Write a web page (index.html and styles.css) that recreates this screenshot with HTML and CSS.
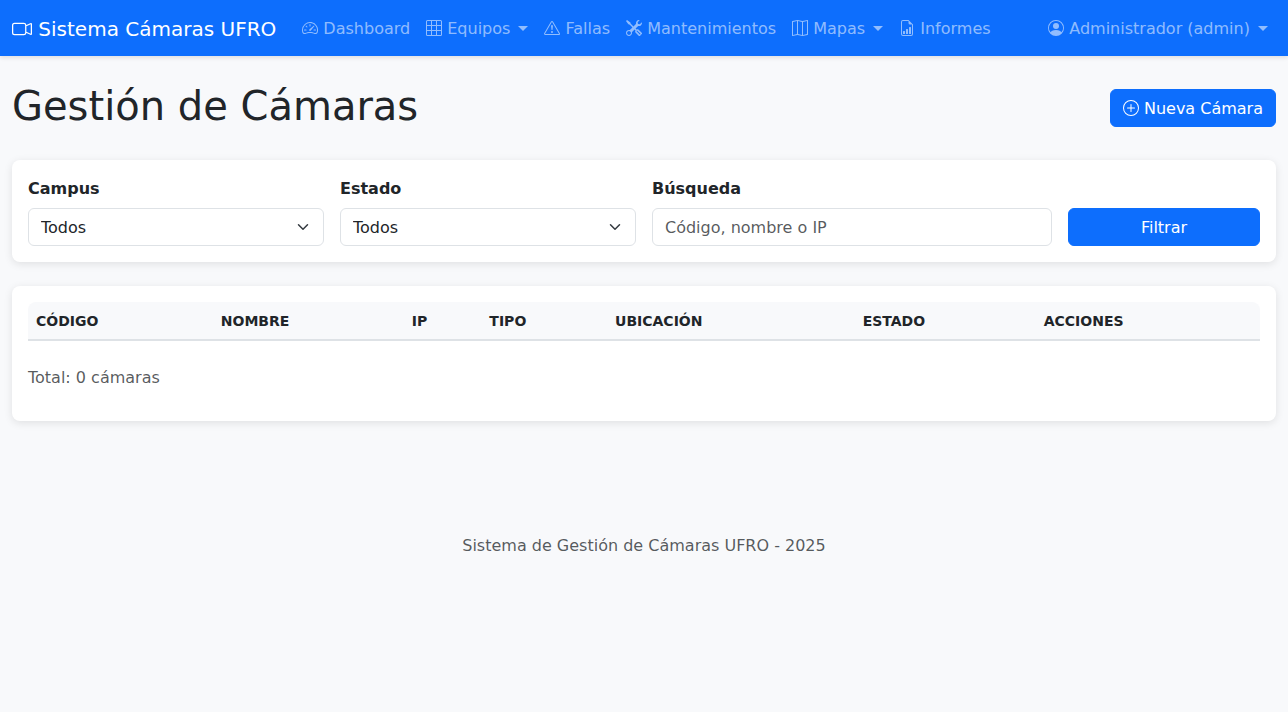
FILE: index.html
```html
<!DOCTYPE html>
<html lang="es">
<head>
<meta charset="utf-8">
<meta name="viewport" content="width=device-width, initial-scale=1">
<title>Gestión de Cámaras</title>
<link rel="stylesheet" href="styles.css">
</head>
<body>
<nav class="navbar">
  <a class="brand" href="#"><svg class="icon" viewBox="0 0 16 16" aria-hidden="true"><path fill-rule="evenodd" d="M0 5a2 2 0 0 1 2-2h7.500a2 2 0 0 1 1.983 1.738l3.110-1.382A1 1 0 0 1 16 4.269v7.462a1 1 0 0 1-1.406.913l-3.111-1.382A2 2 0 0 1 9.500 13H2a2 2 0 0 1-2-2zm11.500 5.175 3.500 1.556V4.269l-3.500 1.556zM2 4a1 1 0 0 0-1 1v6a1 1 0 0 0 1 1h7.500a1 1 0 0 0 1-1V5a1 1 0 0 0-1-1z"/></svg> Sistema Cámaras UFRO</a>
  <ul class="nav">
    <li><a class="nav-link" href="#"><svg class="icon" viewBox="0 0 16 16" aria-hidden="true"><path d="M8 4a.5.5 0 0 1 .5.5V6a.5.5 0 0 1-1 0V4.500A.5.5 0 0 1 8 4M3.732 5.732a.5.5 0 0 1 .707 0l.915.914a.5.5 0 1 1-.708.708l-.914-.915a.5.5 0 0 1 0-.707M2 10a.5.5 0 0 1 .5-.5h1.586a.5.5 0 0 1 0 1H2.500A.5.5 0 0 1 2 10m9.500 0a.5.5 0 0 1 .5-.5h1.500a.5.5 0 0 1 0 1H12a.5.5 0 0 1-.5-.5m.754-4.246a.39.39 0 0 0-.527-.02L7.547 9.310a.91.91 0 1 0 1.302 1.258l3.434-4.297a.39.39 0 0 0-.029-.518z"/><path fill-rule="evenodd" d="M0 10a8 8 0 1 1 15.547 2.661c-.442 1.253-1.845 1.602-2.932 1.250C11.309 13.488 9.475 13 8 13c-1.474 0-3.310.488-4.615.911-1.087.352-2.490.003-2.932-1.250A8 8 0 0 1 0 10m8-7a7 7 0 0 0-6.603 9.329c.203.575.923.876 1.680.63C4.397 12.533 6.358 12 8 12s3.604.532 4.923.96c.757.245 1.477-.056 1.680-.631A7 7 0 0 0 8 3"/></svg> Dashboard</a></li>
    <li><a class="nav-link dropdown" href="#"><svg class="icon" viewBox="0 0 16 16" aria-hidden="true"><path d="M0 1.500A1.500 1.500 0 0 1 1.500 0h13A1.500 1.500 0 0 1 16 1.500v13a1.500 1.500 0 0 1-1.500 1.500h-13A1.500 1.500 0 0 1 0 14.500zM1.500 1a.5.5 0 0 0-.5.5V5h4V1zM5 6H1v4h4zm1 4h4V6H6zm-1 1H1v3.500a.5.5 0 0 0 .5.5H5zm1 0v4h4v-4zm5 0v4h3.500a.5.5 0 0 0 .5-.5V11zm0-1h4V6h-4zm0-5h4V1.500a.5.5 0 0 0-.5-.5H11zm-1 0V1H6v4z"/></svg> Equipos </a></li>
    <li><a class="nav-link" href="#"><svg class="icon" viewBox="0 0 16 16" aria-hidden="true"><path d="M7.938 2.016A.13.13 0 0 1 8.002 2a.13.13 0 0 1 .063.016.15.15 0 0 1 .054.057l6.857 11.667c.036.06.035.124.002.183a.2.2 0 0 1-.054.06.1.1 0 0 1-.066.017H1.146a.1.1 0 0 1-.066-.017.2.2 0 0 1-.054-.06.18.18 0 0 1 .002-.183L7.884 2.073a.15.15 0 0 1 .054-.057m1.044-.45a1.130 1.130 0 0 0-1.960 0L.165 13.233c-.457.778.091 1.767.98 1.767h13.713c.889 0 1.438-.99.98-1.767z"/><path d="M7.002 12a1 1 0 1 1 2 0 1 1 0 0 1-2 0M7.100 5.995a.905.905 0 1 1 1.800 0l-.35 3.507a.552.552 0 0 1-1.100 0z"/></svg> Fallas</a></li>
    <li><a class="nav-link" href="#"><svg class="icon" viewBox="0 0 16 16" aria-hidden="true"><path d="M1 0 0 1l2.200 3.081a1 1 0 0 0 .815.419h.07a1 1 0 0 1 .708.293l2.675 2.675-2.617 2.654A3.003 3.003 0 0 0 0 13a3 3 0 1 0 5.878-.851l2.654-2.617.968.968-.305.914a1 1 0 0 0 .242 1.023l3.270 3.270a.997.997 0 0 0 1.414 0l1.586-1.586a.997.997 0 0 0 0-1.414l-3.270-3.270a1 1 0 0 0-1.023-.242L10.500 9.500l-.96-.96 2.680-2.643A3.005 3.005 0 0 0 16 3q0-.405-.102-.777l-2.140 2.141L12 4l-.364-1.757L13.777.102a3 3 0 0 0-3.675 3.680L7.462 6.460 4.793 3.793a1 1 0 0 1-.293-.707v-.071a1 1 0 0 0-.419-.814zm9.646 10.646a.5.5 0 0 1 .708 0l2.914 2.915a.5.5 0 0 1-.707.707l-2.915-2.914a.5.5 0 0 1 0-.708M3 11l.471.242.529.026.287.445.445.287.026.529L5 13l-.242.471-.026.529-.445.287-.287.445-.529.026L3 15l-.471-.242L2 14.732l-.287-.445L1.268 14l-.026-.529L1 13l.242-.471.026-.529.445-.287.287-.445.529-.026z"/></svg> Mantenimientos</a></li>
    <li><a class="nav-link dropdown" href="#"><svg class="icon" viewBox="0 0 16 16" aria-hidden="true"><path fill-rule="evenodd" d="M15.817.113A.5.5 0 0 1 16 .5v14a.5.5 0 0 1-.402.49l-5 1a.5.5 0 0 1-.196 0L5.500 15.010l-4.902.98A.5.5 0 0 1 0 15.500v-14a.5.5 0 0 1 .402-.49l5-1a.5.5 0 0 1 .196 0L10.500.99l4.902-.98a.5.5 0 0 1 .415.103M10 1.910l-4-.8v12.980l4 .8zm1 12.980 4-.8V1.110l-4 .8zm-6-.8V1.110l-4 .8v12.980z"/></svg> Mapas </a></li>
    <li><a class="nav-link" href="#"><svg class="icon" viewBox="0 0 16 16" aria-hidden="true"><path d="M10 13.500a.5.5 0 0 0 .5.5h1a.5.5 0 0 0 .5-.5v-6a.5.5 0 0 0-.5-.5h-1a.5.5 0 0 0-.5.5zm-2.500.5a.5.5 0 0 1-.5-.5v-4a.5.5 0 0 1 .5-.5h1a.5.5 0 0 1 .5.5v4a.5.5 0 0 1-.5.5zm-3 0a.5.5 0 0 1-.5-.5v-2a.5.5 0 0 1 .5-.5h1a.5.5 0 0 1 .5.5v2a.5.5 0 0 1-.5.5z"/><path d="M14 14V4.500L9.500 0H4a2 2 0 0 0-2 2v12a2 2 0 0 0 2 2h8a2 2 0 0 0 2-2M9.500 3A1.500 1.500 0 0 0 11 4.500h2V14a1 1 0 0 1-1 1H4a1 1 0 0 1-1-1V2a1 1 0 0 1 1-1h5.500z"/></svg> Informes</a></li>
  </ul>
  <ul class="nav nav-end">
    <li><a class="nav-link dropdown" href="#"><svg class="icon" viewBox="0 0 16 16" aria-hidden="true"><path d="M11 6a3 3 0 1 1-6 0 3 3 0 0 1 6 0"/><path fill-rule="evenodd" d="M0 8a8 8 0 1 1 16 0A8 8 0 0 1 0 8m8-7a7 7 0 0 0-5.468 11.370C3.242 11.226 4.805 10 8 10s4.757 1.225 5.468 2.370A7 7 0 0 0 8 1"/></svg> Administrador (admin) </a></li>
  </ul>
</nav>

<main class="container">
  <header class="page-header">
    <h1 class="page-title">Gestión de Cámaras</h1>
    <a class="btn" href="#"><svg class="icon" viewBox="0 0 16 16" aria-hidden="true"><path d="M8 15A7 7 0 1 1 8 1a7 7 0 0 1 0 14m0 1A8 8 0 1 0 8 0a8 8 0 0 0 0 16"/><path d="M8 4a.5.5 0 0 1 .5.5v3h3a.5.5 0 0 1 0 1h-3v3a.5.5 0 0 1-1 0v-3h-3a.5.5 0 0 1 0-1h3v-3A.5.5 0 0 1 8 4"/></svg> Nueva Cámara</a>
  </header>

  <section class="card">
    <form class="filters">
      <div class="field">
        <label class="label" for="campus">Campus</label>
        <div class="select-wrap">
          <select class="control select" id="campus"><option>Todos</option></select>
          <svg class="chevron" viewBox="0 0 16 16" aria-hidden="true"><path d="m2 5 6 6 6-6"/></svg>
        </div>
      </div>
      <div class="field">
        <label class="label" for="estado">Estado</label>
        <div class="select-wrap">
          <select class="control select" id="estado"><option>Todos</option></select>
          <svg class="chevron" viewBox="0 0 16 16" aria-hidden="true"><path d="m2 5 6 6 6-6"/></svg>
        </div>
      </div>
      <div class="field field-search">
        <label class="label" for="busqueda">Búsqueda</label>
        <input class="control" id="busqueda" type="text" placeholder="Código, nombre o IP">
      </div>
      <button class="btn btn-filter" type="submit">Filtrar</button>
    </form>
  </section>

  <section class="card">
    <table class="table">
      <colgroup>
        <col class="col-code">
        <col class="col-name">
        <col class="col-ip">
        <col class="col-type">
        <col class="col-place">
        <col class="col-state">
        <col>
      </colgroup>
      <thead>
        <tr>
          <th scope="col">Código</th>
          <th scope="col">Nombre</th>
          <th scope="col">IP</th>
          <th scope="col">Tipo</th>
          <th scope="col">Ubicación</th>
          <th scope="col">Estado</th>
          <th scope="col">Acciones</th>
        </tr>
      </thead>
      <tbody></tbody>
    </table>
    <p class="total">Total: 0 cámaras</p>
  </section>
</main>

<footer class="footer">Sistema de Gestión de Cámaras UFRO - 2025</footer>
</body>
</html>
```

FILE: styles.css
```css
*, *::before, *::after {
  box-sizing: border-box;
}

body {
  margin: 0;
  background: #f8f9fb;
  color: #212529;
  font-family: Verdana, "DejaVu Sans", sans-serif;
  font-size: 16px;
  line-height: 24px;
}

.icon {
  width: 1em;
  height: 1em;
  fill: currentColor;
  vertical-align: -0.125em;
}

.navbar {
  display: flex;
  align-items: center;
  padding: 9px 12px 7px;
  background: #0d6efd;
  box-shadow: 0 2px 4px rgba(0, 0, 0, 0.1);
}

.brand {
  margin-right: 18px;
  color: #fff;
  font-size: 20px;
  line-height: 30px;
  text-decoration: none;
  white-space: nowrap;
}

.nav {
  display: flex;
  margin: 0;
  padding: 0;
  list-style: none;
}

.nav-end {
  margin-left: auto;
}

.nav-link {
  display: block;
  padding: 8px;
  color: rgba(255, 255, 255, 0.55);
  text-decoration: none;
  white-space: nowrap;
}

.dropdown::after {
  content: "";
  display: inline-block;
  margin-left: 3px;
  vertical-align: 3px;
  border-top: 5px solid;
  border-right: 5px solid transparent;
  border-left: 5px solid transparent;
}

.container {
  padding: 24px 12px 0;
}

.page-header {
  display: flex;
  align-items: center;
  justify-content: space-between;
  margin-bottom: 24px;
}

.page-title {
  margin: 0 0 4px;
  font-size: 40px;
  font-weight: 400;
  line-height: 52px;
}

.btn {
  padding: 7px 12px 5px;
  border: 1px solid #0d6efd;
  border-radius: 6px;
  background: #0d6efd;
  color: #fff;
  font: inherit;
  text-align: center;
  text-decoration: none;
  cursor: pointer;
}

.card {
  margin-bottom: 24px;
  padding: 16px;
  border-radius: 8px;
  background: #fff;
  box-shadow: 0 2px 8px rgba(0, 0, 0, 0.1);
}

.filters {
  display: grid;
  grid-template-columns: repeat(12, 1fr);
  gap: 16px;
  align-items: end;
}

.field {
  grid-column: span 3;
}

.field-search {
  grid-column: span 4;
}

.btn-filter {
  grid-column: span 2;
}

.label {
  display: block;
  padding-top: 1px;
  margin-bottom: 7px;
  font-weight: 700;
}

.control {
  display: block;
  width: 100%;
  height: 38px;
  padding: 6px 12px;
  border: 1px solid #dee2e6;
  border-radius: 6px;
  background: #fff;
  color: #212529;
  font: inherit;
}

.control::placeholder {
  color: rgba(33, 37, 41, 0.75);
  opacity: 1;
}

.select-wrap {
  display: grid;
  align-items: center;
}

.select-wrap > * {
  grid-area: 1 / 1;
}

.select {
  padding: 7px 12px 5px;
  appearance: none;
}

.chevron {
  justify-self: end;
  width: 12px;
  height: 12px;
  margin-right: 15px;
  fill: none;
  stroke: #343a40;
  stroke-width: 2;
  stroke-linecap: round;
  stroke-linejoin: round;
  pointer-events: none;
}

.table {
  width: 100%;
  border-spacing: 0;
  table-layout: fixed;
  text-align: left;
}

.col-code {
  width: 15%;
}

.col-name {
  width: 15.5%;
}

.col-ip {
  width: 6.3%;
}

.col-type {
  width: 10.2%;
}

.col-place {
  width: 20.1%;
}

.col-state {
  width: 14.7%;
}

.table th {
  padding: 9px 8px 7px;
  border-bottom: 2px solid #dee2e6;
  background: #f8f9fb;
  font-size: 14px;
  font-weight: 700;
  line-height: 21px;
  text-transform: uppercase;
}

.table th:first-child {
  border-top-left-radius: 8px;
}

.table th:last-child {
  border-top-right-radius: 8px;
}

.total {
  margin: 25px 0 15px;
  color: rgba(33, 37, 41, 0.75);
}

.footer {
  padding: 89px 12px 48px;
  color: rgba(33, 37, 41, 0.75);
  text-align: center;
}
```
